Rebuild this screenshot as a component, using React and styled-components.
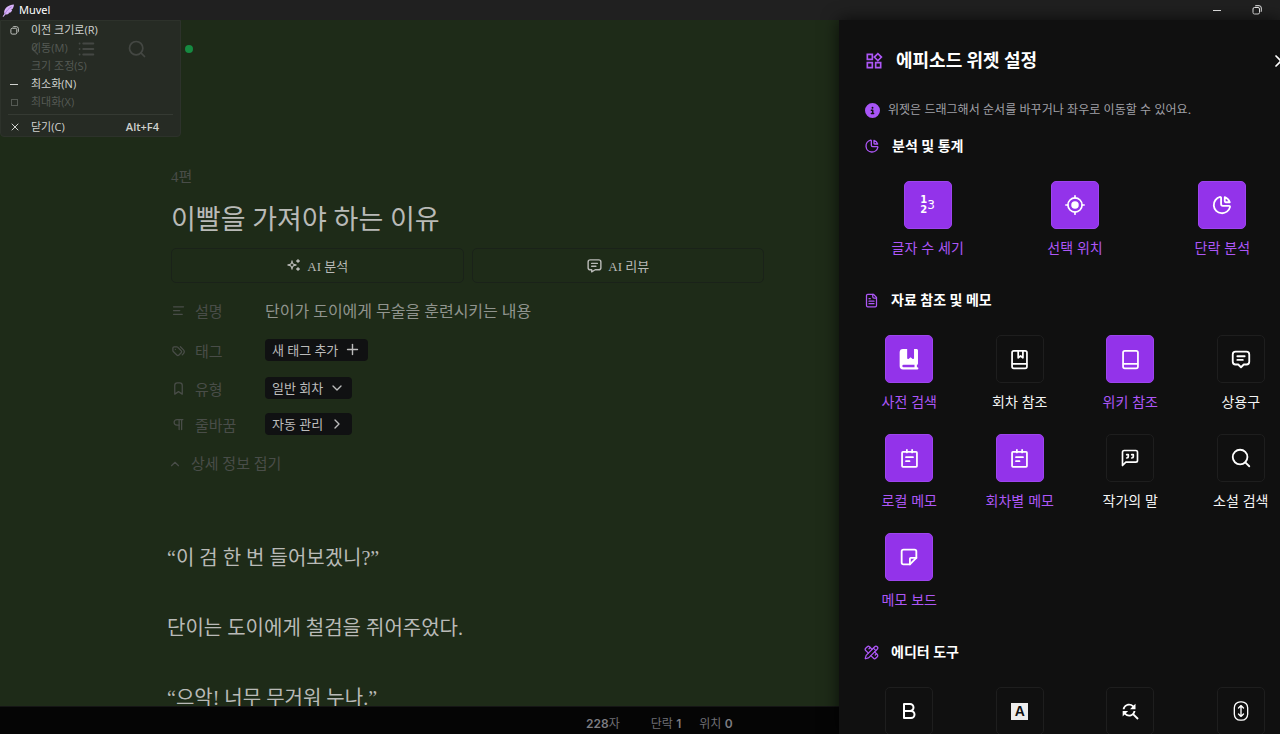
import React from 'react';
import styled, { createGlobalStyle } from 'styled-components';
import {
  TbAlignLeft,
  TbBold,
  TbBookmark,
  TbChartPie,
  TbChevronDown,
  TbChevronLeft,
  TbChevronRight,
  TbChevronUp,
  TbList,
  TbMessage,
  TbMessage2,
  TbNote,
  TbPilcrow,
  TbPlus,
  TbSparkles,
  TbTags,
  TbX,
} from 'react-icons/tb';
import { LuFileText, LuMessageSquareQuote, LuPencilRuler, LuSearch } from 'react-icons/lu';
import { MdFindReplace, MdOutlineWidgets } from 'react-icons/md';
import { FaCircleInfo } from 'react-icons/fa6';

const SANS = `Inter, 'Noto Sans CJK KR', sans-serif`;
const SERIF = `'Liberation Serif', 'Noto Sans CJK KR', serif`;
const SYSTEM = `'Open Sans', 'Noto Sans CJK KR', sans-serif`;

const GlobalStyle = createGlobalStyle`
  * {
    box-sizing: border-box;
  }

  body {
    margin: 0;
    background: #050505;
    overflow: hidden;
  }

  button {
    margin: 0;
    padding: 0;
    border: 0;
    background: none;
    color: inherit;
    font: inherit;
    cursor: pointer;
  }

  svg {
    display: block;
    flex-shrink: 0;
  }
`;

/* ---------- icons ---------- */

const Line = ({ size = 21, width = 2, children }) => (
  <svg
    width={size}
    height={size}
    viewBox="0 0 24 24"
    fill="none"
    stroke="currentColor"
    strokeWidth={width}
    strokeLinecap="round"
    strokeLinejoin="round"
    aria-hidden="true"
  >
    {children}
  </svg>
);

const FeatherLogo = () => (
  <svg width="13" height="13" viewBox="0 0 24 24" aria-hidden="true">
    <path
      d="M22 1C12 2 5 7 4 14c0 2 0 3 .6 4.200L1 23l2 .6 3.200-4.200c2.500.4 5-.2 7-1.800l-2-1 4.500-.8c1.800-1.600 2.800-3.400 3.300-5.400l-2.500-.4 3.300-1.400C21.500 6 22 3.500 22 1z"
      fill="#d9b3fa"
    />
    <path d="M5 19C8 13 12 8 18 5" fill="none" stroke="#a873d8" strokeWidth="1.500" />
  </svg>
);

const RestoreIcon = ({ size = 10 }) => (
  <svg width={size} height={size} viewBox="0 0 10 10" fill="none" stroke="currentColor" aria-hidden="true">
    <rect x="1" y="2.500" width="6.500" height="6.500" rx="1.500" />
    <path d="M3 1.200C3.300.8 3.600.7 4 .7h3A2.300 2.300 0 0 1 9.300 3v3c0 .5-.2.800-.5 1" />
  </svg>
);

const TargetIcon = () => (
  <Line size={20}>
    <circle cx="12" cy="12" r="8.5" />
    <circle cx="12" cy="12" r="4.500" fill="currentColor" stroke="none" />
    <path d="M12 1v2.500M12 20.500V23M1 12h2.500M20.500 12H23" />
  </Line>
);

const DictionaryIcon = () => (
  <svg width="22" height="22" viewBox="0 0 24 24" fill="currentColor" aria-hidden="true">
    <path
      fillRule="evenodd"
      d="M5.500 1H10v10.200c0 .8.900 1.200 1.500.7L13.700 10l2.300 1.900c.6.500 1.500.1 1.500-.7V1h2.700c.9 0 1.600.7 1.600 1.600v14.200c0 .8-.5 1.400-1.200 1.600v2.600h.4a1.200 1.200 0 0 1 0 2.500H5.500A4 4 0 0 1 1.800 19.500V4.700A3.700 3.700 0 0 1 5.500 1zM6 18.400a1.300 1.300 0 0 0 0 2.600h12v-2.600z"
    />
  </svg>
);

const BookMarkIcon = () => (
  <Line>
    <rect x="3.500" y="2" width="17" height="20" rx="2" />
    <path d="M4 17H20M10.500 2.500v7.500l2.700-2 2.700 2V2.500" />
  </Line>
);

const BookIcon = () => (
  <Line>
    <rect x="3.500" y="2" width="17" height="20" rx="2" />
    <path d="M4 17H20" />
  </Line>
);

const MemoIcon = () => (
  <Line>
    <rect x="3.500" y="4.500" width="17" height="17" rx="1" />
    <path d="M9 2v3M15 2v3M8 10.500h8M8 15h4" />
  </Line>
);

const ScrollIcon = () => (
  <Line size={20} width={1.6}>
    <rect x="4" y="1" width="16" height="22" rx="7" />
    <path d="M12 6v12M9 8.500L12 5.500l3 3M9 15.500l3 3 3-3" />
  </Line>
);

const LetterTile = styled.span`
  display: grid;
  place-items: center;
  width: 17px;
  height: 17px;
  background: #ededed;
  color: #111;
  font: 700 14px/17px 'Liberation Sans', sans-serif;
`;

const Digits = styled.span`
  display: grid;
  grid-template: 10px 10px / 7px 8px;
  align-items: center;
  justify-items: center;
  font: 700 10px/10px 'DejaVu Sans', sans-serif;

  span:nth-child(2) {
    grid-row: 1 / 3;
    grid-column: 2;
    font-size: 12px;
    font-weight: 400;
  }
`;

const DigitsIcon = () => (
  <Digits aria-hidden="true">
    <span>1</span>
    <span>3</span>
    <span>2</span>
  </Digits>
);

/* ---------- window frame ---------- */

const Window = styled.div`
  display: flex;
  flex-direction: column;
  height: 100vh;
  background: #050505;
  color: #fff;
  font-family: ${SANS};
`;

const TitleBar = styled.header`
  display: flex;
  align-items: center;
  flex: 0 0 20px;
  padding-left: 2px;
  gap: 4px;
  background: #202020;
  font: 400 11px/20px 'Noto Sans', sans-serif;
`;

const WindowButtons = styled.div`
  display: flex;
  margin-left: auto;
  margin-right: 3px;
`;

const WindowButton = styled.button`
  display: grid;
  place-items: center;
  width: 40px;
  height: 20px;
  color: #ececec;
`;

const Dash = styled.span`
  width: 8px;
  height: 1px;
  background: currentColor;
`;

const Main = styled.div`
  display: flex;
  flex: 1;
  min-height: 0;
`;

/* ---------- system menu ---------- */

const SystemMenu = styled.div`
  position: absolute;
  top: 20px;
  left: 0;
  width: 181px;
  border: 1px solid #2d322b;
  border-radius: 0 0 4px 4px;
  background: rgba(42, 44, 42, 0.7);
  font: 400 11px/18px ${SYSTEM};
`;

const MenuItem = styled.button`
  display: flex;
  align-items: center;
  width: 100%;
  height: 18px;
  padding: 0 21px 0 8px;
  color: ${({ disabled }) => (disabled ? '#555a54' : '#d0d2cf')};
  text-align: left;
`;

const MenuIcon = styled.span`
  display: grid;
  place-items: center;
  width: 10px;
  margin-right: 12px;
`;

const Shortcut = styled.span`
  margin-left: auto;
  font-weight: 600;
`;

const MenuDivider = styled.hr`
  margin: 3px 7px;
  border: 0;
  border-top: 1px solid #353a33;
`;

const SmallSquare = styled.span`
  width: 7px;
  height: 7px;
  border: 1px solid currentColor;
`;

/* ---------- editor ---------- */

const EditorPane = styled.div`
  display: flex;
  flex-direction: column;
  flex: 1;
  min-width: 0;
`;

const Editor = styled.main`
  flex: 1;
  min-height: 0;
  overflow: hidden;
  background: #1e2b18;
  color: #b9bab7;
  font-family: ${SERIF};
`;

const Toolbar = styled.nav`
  display: flex;
  align-items: center;
  gap: 30px;
  height: 58px;
  padding-left: 25px;
  color: #848881;
`;

const SaveDot = styled.span`
  width: 8px;
  height: 8px;
  margin-left: 8px;
  border-radius: 50%;
  background: #168a41;
`;

const Article = styled.article`
  padding: 88px 75px 0 171px;
`;

const EpisodeNo = styled.div`
  color: #494d48;
  font-size: 15px;
  line-height: 22px;
`;

const EpisodeTitle = styled.h1`
  margin: 12px 0 8px;
  font-size: 27px;
  font-weight: 400;
  line-height: 40px;
`;

const ActionRow = styled.div`
  display: flex;
  gap: 8px;
`;

const ActionButton = styled.button`
  display: flex;
  align-items: center;
  justify-content: center;
  gap: 5px;
  flex: 1;
  height: 35px;
  padding-bottom: 1px;
  border: 1px solid #1a2219;
  border-radius: 5px;
  font-size: 13px;
`;

const Details = styled.dl`
  display: grid;
  grid-template-columns: 94px 1fr;
  grid-template-rows: 40px 40px 36px 36px;
  align-items: center;
  margin: 7px 0 0;
  font-size: 15px;
`;

const Term = styled.dt`
  display: flex;
  align-items: center;
  gap: 9px;
  color: #494d48;
`;

const Value = styled.dd`
  margin: 0;
  color: #90948e;
  font-size: 16px;
`;

const Chip = styled.button`
  display: flex;
  align-items: center;
  gap: 6px;
  height: 22px;
  padding: 0 7px 1px;
  border-radius: 4px;
  background: #101112;
  color: #bcbcbc;
  font-size: 13px;
`;

const FoldButton = styled.button`
  display: flex;
  align-items: center;
  gap: 9px;
  margin: 11px 0 0 -3px;
  color: #494d48;
  font-size: 15px;
  line-height: 22px;
`;

const Manuscript = styled.div`
  margin: 48px 0 0 -4px;
  font-size: 20px;
  line-height: 70px;

  p {
    margin: 0;
    white-space: nowrap;
  }
`;

const StatusBar = styled.footer`
  display: flex;
  flex: 0 0 28px;
  padding-left: 586px;
  border-top: 1px solid #151515;
  color: #707075;
  font-size: 12px;
  line-height: 34px;
  white-space: nowrap;
  overflow: hidden;

  span + span {
    margin-left: 18px;
  }

  span:nth-child(2) {
    margin-left: 31px;
  }

  b {
    color: #7d7d82;
    font-weight: 600;
  }
`;

/* ---------- widget drawer ---------- */

const Drawer = styled.aside`
  position: relative;
  flex: 0 0 441px;
  overflow: hidden;
  background: #101010;
  box-shadow: 0 0 16px rgba(0, 0, 0, 0.7);
`;

const DrawerBody = styled.div`
  width: 457px;
  padding: 27px 0 0 15px;
`;

const DrawerHeader = styled.div`
  display: flex;
  align-items: center;
  gap: 12px;
  padding: 0 5px 0 10px;
  line-height: 28px;

  > svg {
    color: #ad57f7;
  }

  h2 {
    flex: 1;
    margin: 0;
    font-size: 18px;
    font-weight: 700;
  }
`;

const Hint = styled.p`
  display: flex;
  align-items: center;
  gap: 8px;
  margin: 25px 0 15px;
  padding-left: 11px;
  color: #a0a0a7;
  font-size: 12px;
  line-height: 20px;
  white-space: nowrap;

  svg {
    color: #a855f7;
  }
`;

const Section = styled.section`
  margin-bottom: 30px;
`;

const SectionTitle = styled.h3`
  display: flex;
  align-items: center;
  gap: 12px;
  margin: 0 0 24px;
  padding-left: 10px;
  font-size: 14px;
  font-weight: 600;
  line-height: 22px;

  svg {
    color: #ad57f7;
  }
`;

const WidgetGrid = styled.div`
  display: grid;
  grid-template-columns: repeat(${({ $columns }) => $columns}, 1fr);
  row-gap: 21px;
`;

const Widget = styled.button`
  display: flex;
  flex-direction: column;
  align-items: center;
  gap: 8px;
  color: ${({ $active }) => ($active ? '#ad57f7' : '#f4f4f4')};
  font-size: 14px;
  font-weight: 400;
  line-height: 22px;
`;

const WidgetIcon = styled.span`
  display: grid;
  place-items: center;
  width: 48px;
  height: 48px;
  border: 1px solid ${({ $active }) => ($active ? '#9d45ee' : '#1e1e1e')};
  border-radius: 5px;
  background: ${({ $active }) => ($active ? '#9333ea' : '#101010')};
  color: #fff;
`;

const sections = [
  {
    title: '분석 및 통계',
    icon: <TbChartPie size={16} />,
    columns: 3,
    widgets: [
      { label: '글자 수 세기', icon: <DigitsIcon />, active: true },
      { label: '선택 위치', icon: <TargetIcon />, active: true },
      { label: '단락 분석', icon: <TbChartPie size={22} />, active: true },
    ],
  },
  {
    title: '자료 참조 및 메모',
    icon: <LuFileText size={15} />,
    columns: 4,
    widgets: [
      { label: '사전 검색', icon: <DictionaryIcon />, active: true },
      { label: '회차 참조', icon: <BookMarkIcon /> },
      { label: '위키 참조', icon: <BookIcon />, active: true },
      { label: '상용구', icon: <TbMessage2 size={22} /> },
      { label: '로컬 메모', icon: <MemoIcon />, active: true },
      { label: '회차별 메모', icon: <MemoIcon />, active: true },
      { label: '작가의 말', icon: <LuMessageSquareQuote size={20} /> },
      { label: '소설 검색', icon: <LuSearch size={22} /> },
      { label: '메모 보드', icon: <TbNote size={22} />, active: true },
    ],
  },
];

const editorTools = [
  { id: 'bold', icon: <TbBold size={24} /> },
  { id: 'highlight', icon: <LetterTile>A</LetterTile> },
  { id: 'replace', icon: <MdFindReplace size={22} /> },
  { id: 'scroll', icon: <ScrollIcon /> },
];

const paragraphs = ['“이 검 한 번 들어보겠니?”', '단이는 도이에게 철검을 쥐어주었다.', '“으악! 너무 무거워 누나.”'];

const WindowMenu = () => (
  <SystemMenu>
    <MenuItem>
      <MenuIcon><RestoreIcon size={9} /></MenuIcon>이전 크기로(R)
    </MenuItem>
    <MenuItem disabled>
      <MenuIcon />이동(M)
    </MenuItem>
    <MenuItem disabled>
      <MenuIcon />크기 조정(S)
    </MenuItem>
    <MenuItem>
      <MenuIcon><Dash /></MenuIcon>최소화(N)
    </MenuItem>
    <MenuItem disabled>
      <MenuIcon><SmallSquare /></MenuIcon>최대화(X)
    </MenuItem>
    <MenuDivider />
    <MenuItem>
      <MenuIcon><TbX size={12} /></MenuIcon>닫기(C)
      <Shortcut>Alt+F4</Shortcut>
    </MenuItem>
  </SystemMenu>
);

const WidgetDrawer = () => (
  <Drawer>
    <DrawerBody>
      <DrawerHeader>
        <MdOutlineWidgets size={20} />
        <h2>에피소드 위젯 설정</h2>
        <button aria-label="닫기"><TbX size={20} /></button>
      </DrawerHeader>
      <Hint>
        <FaCircleInfo size={15} />
        위젯은 드래그해서 순서를 바꾸거나 좌우로 이동할 수 있어요.
      </Hint>
      {sections.map((section) => (
        <Section key={section.title}>
          <SectionTitle>{section.icon}{section.title}</SectionTitle>
          <WidgetGrid $columns={section.columns}>
            {section.widgets.map(({ label, icon, active }) => (
              <Widget key={label} $active={active} aria-pressed={!!active}>
                <WidgetIcon $active={active}>{icon}</WidgetIcon>
                {label}
              </Widget>
            ))}
          </WidgetGrid>
        </Section>
      ))}
      <Section>
        <SectionTitle><LuPencilRuler size={15} />에디터 도구</SectionTitle>
        <WidgetGrid $columns={4}>
          {editorTools.map(({ id, icon }) => (
            <Widget key={id} aria-label={id}>
              <WidgetIcon>{icon}</WidgetIcon>
            </Widget>
          ))}
        </WidgetGrid>
      </Section>
    </DrawerBody>
  </Drawer>
);

const App = () => (
  <Window>
    <GlobalStyle />
    <TitleBar>
      <FeatherLogo />
      Muvel
      <WindowButtons>
        <WindowButton aria-label="최소화"><Dash /></WindowButton>
        <WindowButton aria-label="이전 크기로"><RestoreIcon /></WindowButton>
      </WindowButtons>
    </TitleBar>
    <Main>
      <EditorPane>
        <Editor>
          <Toolbar>
            <button aria-label="뒤로"><TbChevronLeft size={20} /></button>
            <button aria-label="목록"><TbList size={22} /></button>
            <button aria-label="검색"><LuSearch size={20} /></button>
            <SaveDot />
          </Toolbar>
          <Article>
            <EpisodeNo>4편</EpisodeNo>
            <EpisodeTitle>이빨을 가져야 하는 이유</EpisodeTitle>
            <ActionRow>
              <ActionButton><TbSparkles size={16} />AI 분석</ActionButton>
              <ActionButton><TbMessage size={17} />AI 리뷰</ActionButton>
            </ActionRow>
            <Details>
              <Term><TbAlignLeft size={15} />설명</Term>
              <Value>단이가 도이에게 무술을 훈련시키는 내용</Value>
              <Term><TbTags size={15} />태그</Term>
              <Value><Chip>새 태그 추가 <TbPlus size={17} /></Chip></Value>
              <Term><TbBookmark size={15} />유형</Term>
              <Value><Chip>일반 회차 <TbChevronDown size={16} /></Chip></Value>
              <Term><TbPilcrow size={15} />줄바꿈</Term>
              <Value><Chip>자동 관리 <TbChevronRight size={16} /></Chip></Value>
            </Details>
            <FoldButton><TbChevronUp size={14} />상세 정보 접기</FoldButton>
            <Manuscript>
              {paragraphs.map((text) => (
                <p key={text}>{text}</p>
              ))}
            </Manuscript>
          </Article>
        </Editor>
        <StatusBar>
          <span><b>228</b>자</span>
          <span>단락 <b>1</b></span>
          <span>위치 <b>0</b></span>
        </StatusBar>
      </EditorPane>
      <WidgetDrawer />
    </Main>
    <WindowMenu />
  </Window>
);

export default App;
